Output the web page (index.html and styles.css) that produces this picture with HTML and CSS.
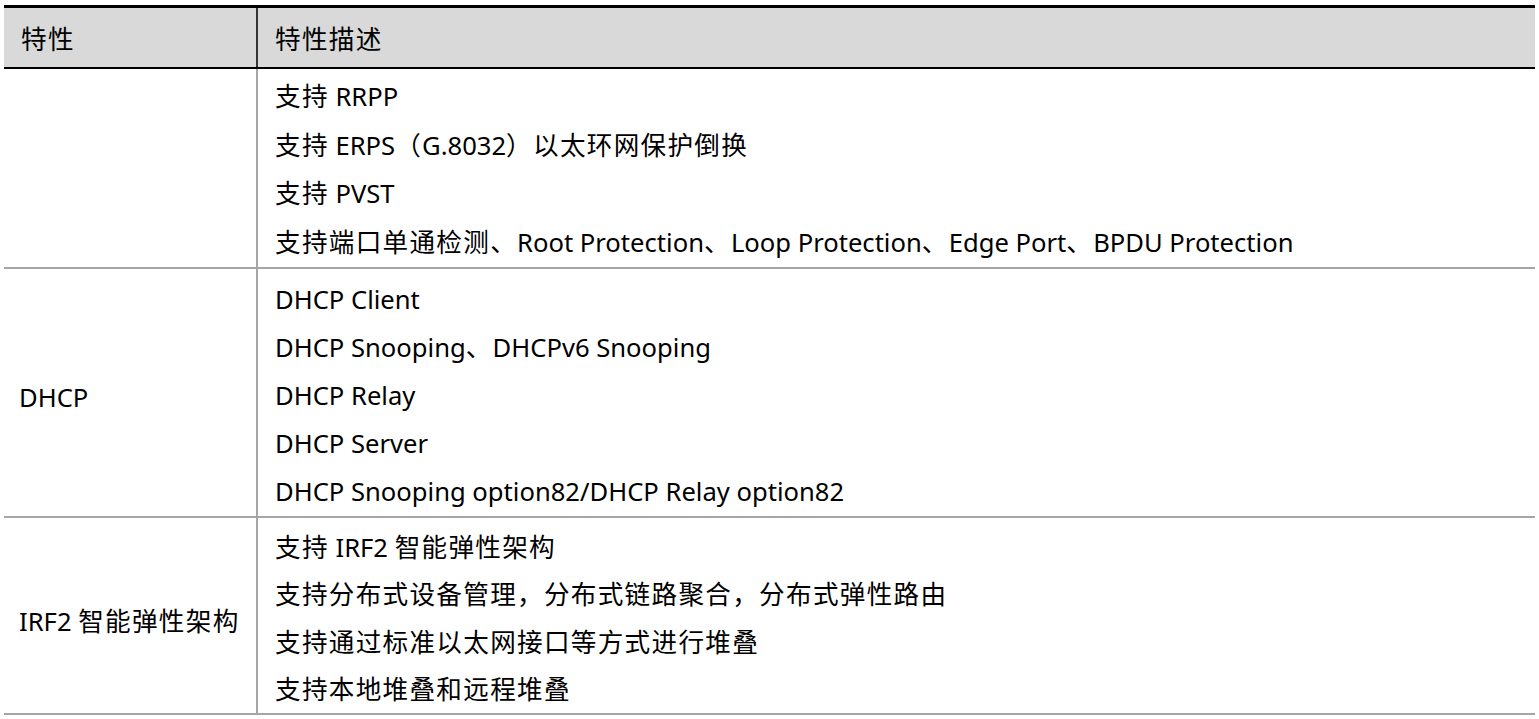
FILE: index.html
```html
<!DOCTYPE html>
<html lang="zh-CN">
<head>
    <meta charset="UTF-8">
    <title>特性列表</title>
    <link rel="stylesheet" href="styles.css">
</head>
<body>
    <table class="spec">
        <thead>
            <tr>
                <th class="name"><span class="zh">特性</span></th>
                <th><span class="zh">特性描述</span></th>
            </tr>
        </thead>
        <tbody>
            <tr class="loop">
                <td class="name"></td>
                <td>
                    <p><span class="zh">支持</span> RRPP</p>
                    <p><span class="zh">支持</span> ERPS<span class="zh">（</span>G.8032<span class="zh">）以太环网保护倒换</span></p>
                    <p><span class="zh">支持</span> PVST</p>
                    <p><span class="zh">支持端口单通检测、</span>Root Protection<span class="zh">、</span>Loop Protection<span class="zh">、</span>Edge Port<span class="zh">、</span>BPDU Protection</p>
                </td>
            </tr>
            <tr class="dhcp">
                <td class="name">DHCP</td>
                <td>
                    <p>DHCP Client</p>
                    <p>DHCP Snooping<span class="zh">、</span>DHCPv6 Snooping</p>
                    <p>DHCP Relay</p>
                    <p>DHCP Server</p>
                    <p>DHCP Snooping option82/DHCP Relay option82</p>
                </td>
            </tr>
            <tr class="irf">
                <td class="name">IRF2 <span class="zh">智能弹性架构</span></td>
                <td>
                    <p><span class="zh">支持</span> IRF2 <span class="zh">智能弹性架构</span></p>
                    <p><span class="zh">支持分布式设备管理，分布式链路聚合，分布式弹性路由</span></p>
                    <p><span class="zh">支持通过标准以太网接口等方式进行堆叠</span></p>
                    <p><span class="zh">支持本地堆叠和远程堆叠</span></p>
                </td>
            </tr>
        </tbody>
    </table>
</body>
</html>
```

FILE: styles.css
```css
body {
    margin: 0;
    padding: 5px 4px 0;
    background: #fff;
    font-family: "Noto Sans", "Noto Sans CJK SC", sans-serif;
    font-size: 25.6px;
    color: #000;
}
.zh {
    letter-spacing: 1.3px;
}
.spec {
    width: 1531px;
    border-collapse: collapse;
    border-top: 3px solid #000;
}
.spec th {
    background: #d9d9d9;
    font-weight: normal;
    text-align: left;
    height: 59px;
    padding: 0 0 0 17px;
    border-bottom: 2px solid #000;
    border-left: 2px solid #333;
}
.spec td {
    vertical-align: middle;
    padding: 4px 0 0 17px;
    border-bottom: 2px solid #a6a6a6;
    border-left: 2px solid #a6a6a6;
}
.spec .name {
    width: 235px;
    border-left: none;
}
.spec p {
    margin: 0;
    line-height: 48.5px;
}
.dhcp td {
    padding-top: 7px;
}
.dhcp p {
    line-height: 48px;
}
.dhcp .name {
    padding: 10px 0 0 15px;
}
.irf td {
    padding-top: 6px;
}
.irf p {
    line-height: 47.3px;
}
.irf .name {
    padding: 8px 0 0 15px;
}
```
